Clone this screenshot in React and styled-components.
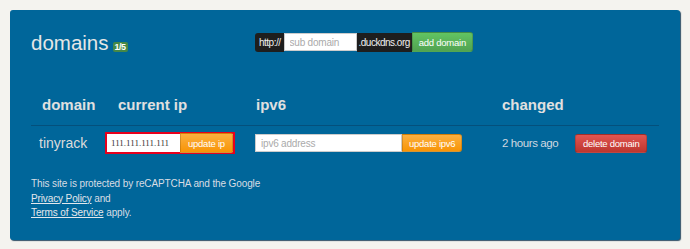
import React from "react";
import styled, { createGlobalStyle } from "styled-components";

const GlobalStyle = createGlobalStyle`
  html, body {
    margin: 0;
    padding: 0;
    background: #f4f3ef;
    font-family: "Liberation Sans", Arial, sans-serif;
  }
`;

const domains = [
  { name: "tinyrack", ip: "111.111.111.111", changed: "2 hours ago" },
];

const App = () => {
  return (
    <>
      <GlobalStyle />
      <Page>
        <Panel>
          <TopRow>
            <TitleBlock>
              <Title>domains</Title>
              <Badge>1/5</Badge>
            </TitleBlock>
            <AddForm>
              <AddOn>http://</AddOn>
              <TextInput width="73px" placeholder="sub domain" />
              <AddOn>.duckdns.org</AddOn>
              <Button variant="success" height="20px" pad="0 6px" radius="0 3px 3px 0">
                add domain
              </Button>
            </AddForm>
          </TopRow>

          <Table>
            <HeadRow>
              <HeadCell pad="11px">domain</HeadCell>
              <HeadCell pad="13px">current ip</HeadCell>
              <HeadCell pad="1px">ipv6</HeadCell>
              <HeadCell>changed</HeadCell>
              <HeadCell />
            </HeadRow>
            {domains.map((d) => (
              <BodyRow key={d.name}>
                <NameCell>{d.name}</NameCell>
                <Cell>
                  <Highlight>
                    <IpInput defaultValue={d.ip} />
                    <Button variant="warning" height="20px" pad="0 7px">
                      update ip
                    </Button>
                  </Highlight>
                </Cell>
                <Cell>
                  <TextInput width="147px" placeholder="ipv6 address" />
                  <Button variant="warning" height="18px" pad="0 6px" radius="0 3px 3px 0">
                    update ipv6
                  </Button>
                </Cell>
                <TimeCell>{d.changed}</TimeCell>
                <Cell>
                  <Button variant="danger" height="19px" pad="0 7px" radius="3px">
                    delete domain
                  </Button>
                </Cell>
              </BodyRow>
            ))}
          </Table>

          <Footer>
            This site is protected by reCAPTCHA and the Google
            <br />
            <FooterLink>Privacy Policy</FooterLink> and
            <br />
            <FooterLink>Terms of Service</FooterLink> apply.
          </Footer>
        </Panel>
      </Page>
    </>
  );
};

const Page = styled.div`
  padding: 10px 10px 9px 10px;
`;

const Panel = styled.div`
  width: 670px;
  height: 230px;
  box-sizing: border-box;
  background: #00669a;
  border-radius: 3px;
  box-shadow: 1px 1px 1px rgba(0, 40, 70, 0.8);
  padding: 22px 21px 0 21px;
  color: #e4e4e4;
`;

const TopRow = styled.div`
  display: flex;
  align-items: center;
  height: 20px;
`;

const TitleBlock = styled.div`
  width: 224px;
  display: flex;
  align-items: flex-end;
`;

const Title = styled.div`
  font-size: 20.5px;
  line-height: 20px;
  color: #e6e6e6;
  margin-top: 2px;
`;

const Badge = styled.span`
  background: #468847;
  color: #fff;
  font-size: 9px;
  font-weight: bold;
  line-height: 9px;
  padding: 1px 2px 0;
  border-radius: 2px;
  margin-left: 4px;
  margin-bottom: 1px;
  letter-spacing: -0.5px;
`;

const AddForm = styled.div`
  display: flex;
  align-items: center;
  height: 20px;
`;

const AddOn = styled.div`
  background: #1e1e1e;
  color: #f0f0f0;
  font-size: 10px;
  letter-spacing: -0.5px;
  height: 19px;
  line-height: 19px;
  padding: 0 2px;
  &:first-child {
    padding: 0 3px 0 4px;
    border-radius: 3px 0 0 3px;
  }
`;

const TextInput = styled.input`
  width: ${(p) => p.width};
  height: 18px;
  box-sizing: border-box;
  border: 1px solid #ccc;
  background: #fff;
  font-family: "Liberation Sans", Arial, sans-serif;
  font-size: 10px;
  letter-spacing: -0.2px;
  padding: 0 5px;
  margin: 0;
  outline: none;
  &::placeholder {
    color: #aaa;
  }
`;

const Button = styled.button`
  height: ${(p) => p.height};
  padding: ${(p) => p.pad};
  margin: 0;
  border: 1px solid rgba(0, 0, 0, 0.15);
  border-radius: ${(p) => p.radius || "0 2px 2px 0"};
  font-family: "Liberation Sans", Arial, sans-serif;
  font-size: 9.5px;
  letter-spacing: -0.25px;
  color: #fff;
  cursor: pointer;
  white-space: nowrap;
  background: ${(p) =>
    p.variant === "success"
      ? "linear-gradient(#62c462, #51a351)"
      : p.variant === "danger"
      ? "linear-gradient(#e15550, #bd362f)"
      : "linear-gradient(#fbb040, #f89406)"};
`;

const Table = styled.div`
  margin-top: 36px;
  width: 628px;
`;

const columns = "74px 150px 247px 73px 1fr";

const HeadRow = styled.div`
  display: grid;
  grid-template-columns: ${columns};
  padding: 8px 0 11px;
  border-bottom: 1px solid #04507c;
`;

const HeadCell = styled.div`
  font-size: 15px;
  font-weight: bold;
  line-height: 18px;
  color: #e0e0e0;
  padding-left: ${(p) => p.pad || "0"};
`;

const BodyRow = styled.div`
  display: grid;
  grid-template-columns: ${columns};
  align-items: center;
  padding: 6px 0;
`;

const Cell = styled.div`
  display: flex;
  align-items: center;
`;

const NameCell = styled.div`
  font-size: 14px;
  color: #dcdcdc;
  padding-left: 8px;
`;

const TimeCell = styled.div`
  font-size: 11.5px;
  letter-spacing: -0.4px;
  color: #d0d8e0;
`;

const Highlight = styled.div`
  display: flex;
  align-items: center;
  border: 2px solid #e8001c;
  height: 22px;
  box-sizing: border-box;
  background: #fff;
`;

const IpInput = styled.input`
  width: 73px;
  height: 18px;
  box-sizing: border-box;
  border: none;
  margin: 0;
  padding: 0 4px;
  font-family: "Liberation Serif", "Times New Roman", serif;
  font-size: 9px;
  color: #333;
  outline: none;
`;

const Footer = styled.div`
  margin-top: 17px;
  font-size: 10px;
  letter-spacing: -0.12px;
  line-height: 14.5px;
  color: #d8dde4;
`;

const FooterLink = styled.span`
  text-decoration: underline;
  color: #e4e8ec;
`;

export default App;
